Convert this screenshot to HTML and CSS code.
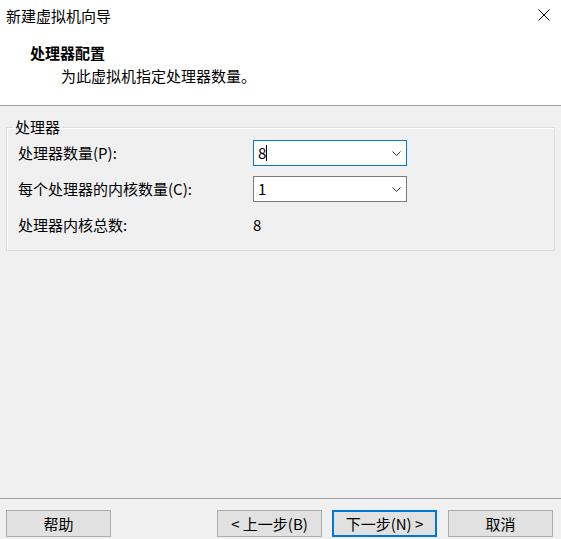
FILE: index.html
```html
<!DOCTYPE html>
<html lang="zh-CN">
<head>
  <meta charset="UTF-8">
  <meta name="viewport" content="width=device-width, initial-scale=1.0">
  <title>新建虚拟机向导</title>
  <link rel="stylesheet" href="styles.css">
</head>
<body>
  <div class="wizard-top">
    <div class="title-row">
      <span class="window-title">新建虚拟机向导</span>
      <button class="close-btn" aria-label="关闭">
        <svg width="12" height="12" viewBox="0 0 12 12"><path d="M0.5 0.5 L11.5 11.5 M11.5 0.5 L0.5 11.5" stroke="#000" stroke-width="1" fill="none"/></svg>
      </button>
    </div>
    <h1 class="page-title">处理器配置</h1>
    <p class="page-desc">为此虚拟机指定处理器数量。</p>
  </div>

  <div class="wizard-body">
    <fieldset class="group-box">
      <legend>处理器</legend>
      <div class="field-row">
        <span class="field-label">处理器数量(P):</span>
        <div class="combo focused">
          <span class="combo-value">8<span class="caret"></span></span>
          <svg class="chevron" width="9" height="5" viewBox="0 0 9 5"><path d="M0.5 0.5 L4.5 4.5 L8.5 0.5" stroke="#333" stroke-width="1" fill="none"/></svg>
        </div>
      </div>
      <div class="field-row">
        <span class="field-label">每个处理器的内核数量(C):</span>
        <div class="combo">
          <span class="combo-value">1</span>
          <svg class="chevron" width="9" height="5" viewBox="0 0 9 5"><path d="M0.5 0.5 L4.5 4.5 L8.5 0.5" stroke="#333" stroke-width="1" fill="none"/></svg>
        </div>
      </div>
      <div class="field-row last">
        <span class="field-label">处理器内核总数:</span>
        <span class="field-value">8</span>
      </div>
    </fieldset>
  </div>

  <div class="wizard-footer">
    <button class="btn">帮助</button>
    <button class="btn btn-back">&lt; 上一步(B)</button>
    <button class="btn btn-next">下一步(N) &gt;</button>
    <button class="btn btn-cancel">取消</button>
  </div>
</body>
</html>
```

FILE: styles.css
```css
:root {
  --color-bg: #f0f0f0;
  --color-line: #a0a0a0;
  --color-group: #dcdcdc;
  --color-btn: #e1e1e1;
  --color-btn-border: #adadad;
  --color-accent: #0078d7;
  --font-family: "Noto Sans CJK SC", "Noto Sans", sans-serif;
}
* { box-sizing: border-box; margin: 0; padding: 0; }
html, body { height: 100%; }
body {
  display: flex;
  flex-direction: column;
  background: var(--color-bg);
  font-family: var(--font-family);
  font-size: 15px;
  line-height: 20px;
  color: #000;
}

/* Header */
.wizard-top {
  background: #fff;
  height: 106px;
  border-bottom: 1px solid var(--color-line);
}
.title-row {
  display: flex;
  justify-content: space-between;
  align-items: flex-start;
  padding: 6px 11px 0 6px;
}
.close-btn {
  background: none;
  border: none;
  display: flex;
  margin-top: 3px;
}
.page-title {
  font-size: 15px;
  font-weight: bold;
  line-height: 20px;
  padding-left: 30px;
  margin-top: 17px;
}
.page-desc {
  padding-left: 61px;
  margin-top: 3px;
}

/* Body */
.wizard-body {
  flex: 1;
  padding: 11px 6px 0;
}
.group-box {
  border: 1px solid var(--color-group);
  box-shadow: inset 1px 1px 0 #fff;
  padding: 3px 6px 12px;
  min-width: 0;
}
.group-box legend { padding: 0 2px; }
.field-row {
  display: flex;
  align-items: center;
  height: 26px;
  padding-left: 5px;
  margin-bottom: 10px;
}
.field-row.last { margin-bottom: 0; }
.field-label { width: 235px; flex-shrink: 0; }
.combo {
  width: 154px;
  height: 26px;
  border: 1px solid #7a7a7a;
  background: #fff;
  display: flex;
  align-items: center;
  padding-left: 4px;
}
.combo.focused { border-color: var(--color-accent); }
.combo-value { flex: 1; display: flex; align-items: center; }
.caret {
  display: inline-block;
  width: 1px;
  height: 16px;
  background: #000;
}
.chevron { margin-right: 5px; }

/* Footer */
.wizard-footer {
  display: flex;
  border-top: 1px solid var(--color-line);
  padding: 11px 8px 2px 6px;
}
.btn {
  width: 105px;
  height: 27px;
  background: var(--color-btn);
  border: 1px solid var(--color-btn-border);
  font-family: var(--font-family);
  font-size: 15px;
  color: #000;
}
.btn-back { margin-left: auto; }
.btn-next { margin-left: 10px; border: 2px solid var(--color-accent); }
.btn-cancel { margin-left: 11px; }
```
